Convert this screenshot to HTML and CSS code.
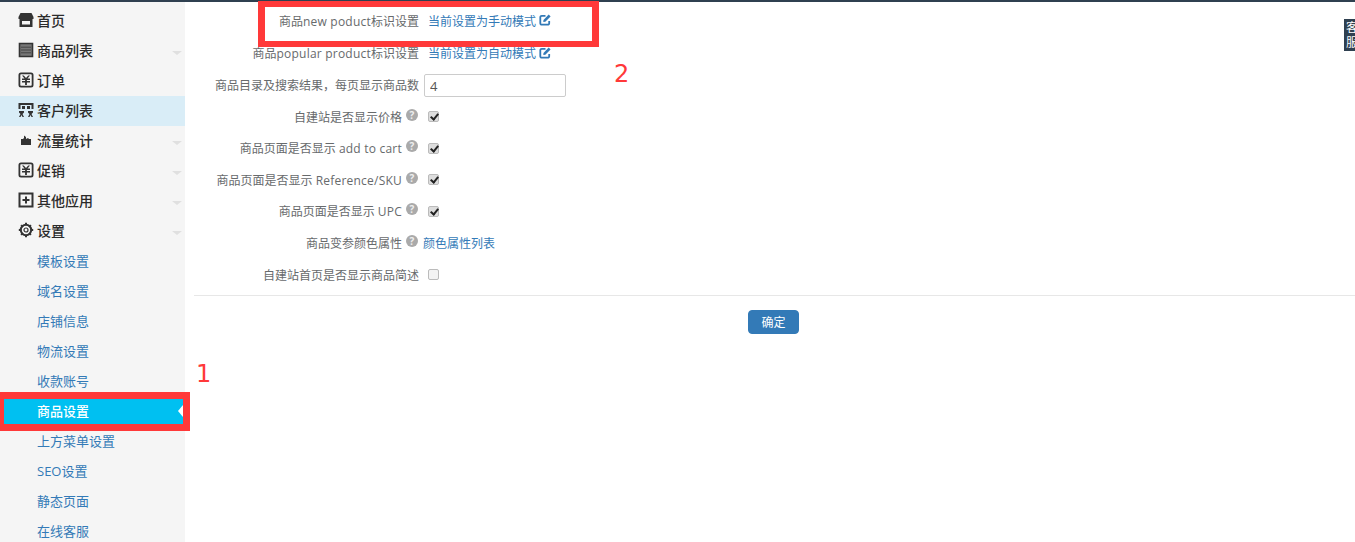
FILE: index.html
```html
<!DOCTYPE html>
<html lang="zh-CN">
<head>
<meta charset="utf-8">
<title>商品设置</title>
<link rel="stylesheet" href="styles.css">
</head>
<body>
<div class="page">
  <aside class="sidebar">
    <nav class="menu">
      <a class="item"><svg class="ico" viewBox="0 0 16 16"><path d="M2.500 1h11L15.500 5v2H.5V5z"/><path d="M1.500 7h13v8h-13zM4 9v3.500h8V9z" fill-rule="evenodd"/></svg>首页</a>
      <a class="item caret"><svg class="ico" viewBox="0 0 16 16"><path d="M1.500 1.500h13v13h-13z" fill="#777" stroke="#333" stroke-width="1.600"/><path class="stripes" d="M3 5.200h10M3 8h10M3 10.800h10"/></svg>商品列表</a>
      <a class="item"><svg class="ico" viewBox="0 0 16 16"><use href="#yen"/></svg>订单</a>
      <a class="item hl"><svg class="ico" viewBox="0 0 16 16"><path d="M.5 1h15v6h-2V3h-11v4h-2zM4 4h3v3H4zM9 4h3v3H9zM1 9h5v1.500L4.500 12 6 15H4.500L3.500 13l-1 2H1l1.500-3L1 10.500zM10 9h5v1.500L13.500 12l1.500 3h-1.500l-1-2-1 2H10l1.500-3L10 10.500z"/></svg>客户列表</a>
      <a class="item caret"><svg class="ico" viewBox="0 0 16 16"><path d="M3 7h2l1-1V3.500L8 5v2l2-1 1 1h2v6H3z"/></svg>流量统计</a>
      <a class="item caret"><svg class="ico" viewBox="0 0 16 16"><use href="#yen"/></svg>促销</a>
      <a class="item caret"><svg class="ico" viewBox="0 0 16 16"><path d="M.5.500h15v15H.5zM2.500 2.500v11h11v-11zM7 4.500h2V7h2.500v2H9v2.500H7V9H4.500V7H7z" fill-rule="evenodd"/></svg>其他应用</a>
      <a class="item caret"><svg class="ico" viewBox="0 0 16 16"><circle class="gear" cx="8" cy="8" r="5.200"/><circle class="gear-in" cx="8" cy="8" r="2"/><path d="M7 .8h2v2.500H7zM7 12.700h2v2.500H7zM.8 7h2.500v2H.8zM12.700 7h2.500v2h-2.500zM2.400 3.800l1.400-1.400 1.800 1.800-1.400 1.400zM10.400 11.800l1.400-1.400 1.800 1.800-1.400 1.400zM2.400 12.200l1.800-1.800 1.400 1.400-1.800 1.800zM10.400 4.200l1.800-1.800 1.400 1.400-1.800 1.800z"/></svg>设置</a>
      <a class="sub">模板设置</a>
      <a class="sub">域名设置</a>
      <a class="sub">店铺信息</a>
      <a class="sub">物流设置</a>
      <a class="sub">收款账号</a>
      <a class="sub active">商品设置</a>
      <a class="sub">上方菜单设置</a>
      <a class="sub">SEO设置</a>
      <a class="sub">静态页面</a>
      <a class="sub">在线客服</a>
    </nav>
  </aside>
  <main class="main">
    <form class="form">
      <div class="row"><label class="lab">商品<span class="en">new poduct</span>标识设置</label><a class="link">当前设置为手动模式<svg class="edit" viewBox="0 0 12 12"><path d="M10.200 7v2.200a1.500 1.500 0 0 1-1.500 1.500H2.800a1.500 1.500 0 0 1-1.500-1.500V3.300a1.500 1.500 0 0 1 1.500-1.500H6.500"/><path class="pen" d="M4.500 5.900L9.700.6l1.900 1.800-5.300 5.400-2 .3z"/></svg></a></div>
      <div class="row"><label class="lab">商品<span class="en">popular product</span>标识设置</label><a class="link">当前设置为自动模式<svg class="edit" viewBox="0 0 12 12"><path d="M10.200 7v2.200a1.500 1.500 0 0 1-1.500 1.500H2.800a1.500 1.500 0 0 1-1.500-1.500V3.300a1.500 1.500 0 0 1 1.500-1.500H6.500"/><path class="pen" d="M4.500 5.900L9.700.6l1.900 1.800-5.300 5.400-2 .3z"/></svg></a></div>
      <div class="row"><label class="lab">商品目录及搜索结果<span class="wide">，</span>每页显示商品数</label><input class="num" type="text" value="4"></div>
      <div class="row"><label class="lab">自建站是否显示价格<span class="help">?</span></label><input class="chk" type="checkbox" checked></div>
      <div class="row"><label class="lab">商品页面是否显示 <span class="en">add to cart</span><span class="help">?</span></label><input class="chk" type="checkbox" checked></div>
      <div class="row"><label class="lab">商品页面是否显示 <span class="en">Reference/SKU</span><span class="help">?</span></label><input class="chk" type="checkbox" checked></div>
      <div class="row"><label class="lab">商品页面是否显示 <span class="en">UPC</span><span class="help">?</span></label><input class="chk" type="checkbox" checked></div>
      <div class="row"><label class="lab">商品变参颜色属性<span class="help">?</span></label><a class="link near">颜色属性列表</a></div>
      <div class="row"><label class="lab">自建站首页是否显示商品简述</label><input class="chk" type="checkbox"></div>
      <hr class="rule">
      <div class="actions"><button class="btn" type="button">确定</button></div>
    </form>
  </main>
</div>
<svg class="defs" width="0" height="0"><defs><path id="yen" fill-rule="evenodd" d="M3 .5h10A2.500 2.500 0 0 1 15.500 3v10a2.500 2.500 0 0 1-2.500 2.500H3A2.500 2.500 0 0 1 .5 13V3A2.500 2.500 0 0 1 3 .5zM3 2.300a.7.7 0 0 0-.7.7v10a.7.7 0 0 0 .7.7h10a.7.7 0 0 0 .7-.7V3a.7.7 0 0 0-.7-.7zM4 3.500h1.800L8 6l2.200-2.500H12L9.500 6.500H12V8H8.900v1H12v1.500H8.900V13H7.100v-2.500H4V9h3.100V8H4V6.500h2.500z"/></defs></svg>
<div class="mark box-one"></div>
<div class="mark box-two"></div>
<span class="num-note note-one">1</span>
<span class="num-note note-two">2</span>
<div class="kefu">客服</div>
</body>
</html>
```
FILE: styles.css
```css
* { box-sizing: border-box; }
html, body { margin: 0; height: 100%; overflow: hidden; background: #fff; }
body { font-family: "Open Sans", "Noto Sans CJK SC", sans-serif; font-size: 12px; color: #676a6c; position: relative; }
.page { display: flex; height: 542px; border-top: 2px solid #2f4050; }
.sidebar { width: 185px; flex: none; background: #f5f5f5; overflow: hidden; padding-top: 4px; }
.menu { display: flex; flex-direction: column; }
.item, .sub { height: 30px; display: flex; align-items: center; position: relative; white-space: nowrap; padding-bottom: 2px; }
.item { padding-left: 18px; font-size: 14px; font-weight: 500; color: #2b2b2b; }
.ico { width: 16px; height: 16px; margin-right: 3px; fill: #333; flex: none; }
.stripes { fill: none; stroke: #444; stroke-width: 1; }
.gear { fill: none; stroke: #333; stroke-width: 2; }
.gear-in { fill: none; stroke: #333; stroke-width: 1.200; }
.hl { background: #d9edf7; }
.caret::after { content: ""; position: absolute; left: 172px; top: 15px; border: 5px solid transparent; border-top: 4px solid #e0e0e0; border-bottom: 0; }
.sub { padding-left: 37px; font-size: 13px; color: #337ab7; }
.active { color: #fff; background: #00c0f1; font-weight: 500; }
.active::after { content: ""; position: absolute; right: 2px; top: 9px; border: 6px solid transparent; border-right: 5px solid #fff; border-left: 0; }
.main { flex: 1; padding-left: 9px; min-width: 0; }
.form { padding-top: 4px; }
.row { display: flex; align-items: center; height: 31.6px; }
.row:first-child { padding-bottom: 2px; }
.lab { width: 225px; flex: none; text-align: right; white-space: nowrap; color: #676a6c; }
.en { letter-spacing: .22px; }
.wide { font-family: "Noto Sans CJK SC", sans-serif; }
.link { margin-left: 9px; color: #337ab7; display: flex; align-items: center; white-space: nowrap; }
.link.near { margin-left: 4px; }
.edit { width: 12px; height: 12px; margin-left: 3px; margin-top: -1px; fill: none; stroke: #337ab7; stroke-width: 1.800; }
.pen { fill: #337ab7; stroke: none; }
.help { display: inline-block; width: 12px; height: 12px; margin: 0 1px 0 4px; border-radius: 50%; background: #aaa; color: #eee; font-size: 10px; font-weight: 700; line-height: 12px; text-align: center; vertical-align: 3px; }
.num { width: 142px; height: 23px; margin: 2px 0 0 5px; padding: 2px 5px; border: 1px solid #ccc; border-radius: 2px; font: 13px "Open Sans", sans-serif; color: #555; background: #fff; }
.chk { appearance: none; position: relative; width: 11px; height: 11px; margin: 0 0 0 9px; border: 1px solid #bbb; border-radius: 2px; background: #f3f3f3; }
.chk:checked { background: #ddd; }
.chk:checked::after { content: ""; position: absolute; left: 3px; top: 0; width: 3px; height: 6px; border: solid #222; border-width: 0 2px 2px 0; transform: rotate(40deg); }
.rule { margin: 5px 0 0; border: 0; border-top: 1px solid #e7e7e7; }
.actions { display: flex; justify-content: center; padding: 14px 0 0 7px; margin-left: -9px; }
.btn { width: 51px; height: 24px; padding: 0; border: 1px solid #337ab7; border-radius: 4px; background: #337ab7; color: #fff; font: 12px "Open Sans", "Noto Sans CJK SC", sans-serif; }
.defs { position: absolute; }
.mark { position: absolute; border-style: solid; border-color: #ff3939; pointer-events: none; }
.box-one { left: 0; top: 392px; width: 190px; height: 39px; border-width: 7px 7px 7px 4px; }
.box-two { left: 258px; top: 1px; width: 341px; height: 46px; border-width: 6px 7px 6px 7px; }
.num-note { position: absolute; font: 24px/28px "DejaVu Sans", sans-serif; color: #ff3939; }
.note-one { left: 196px; top: 360px; }
.note-two { left: 614px; top: 60px; }
.kefu { position: absolute; left: 1344px; top: 19px; width: 11px; height: 32px; overflow: hidden; background: #2f4050; color: #fff; font-size: 12px; line-height: 15px; padding: 1px 0 0 2px; }
```
